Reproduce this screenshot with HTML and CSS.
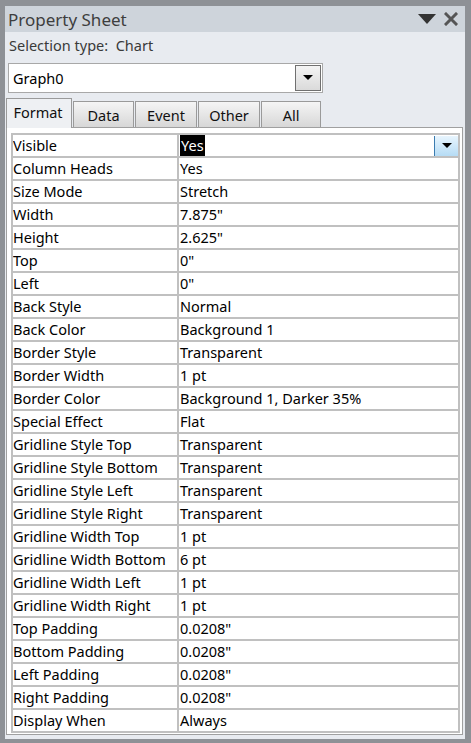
FILE: index.html
```html
<!DOCTYPE html>
<html>
<head>
<meta charset="utf-8">
<link rel="stylesheet" href="styles.css">
</head>
<body>
<div class="frame">
  <div class="panel">
    <div class="titlebar">
      <span class="title">Property Sheet</span>
      <div class="tb-icons">
        <svg class="tb-tri" width="18" height="11" viewBox="0 0 18 11"><polygon points="0,0 18,0 9,10" fill="#333"/></svg>
        <svg class="tb-x" width="14" height="14" viewBox="0 0 14 14"><path d="M2 2 L12 12 M12 2 L2 12" stroke="#555" stroke-width="3" stroke-linecap="square"/></svg>
      </div>
    </div>
    <div class="seltype">Selection type:&nbsp; Chart</div>
    <div class="combo">
      <span class="combo-text">Graph0</span>
      <div class="combo-btn"><svg width="10" height="6" viewBox="0 0 10 6"><polygon points="0,0 10,0 5,5" fill="#000"/></svg></div>
    </div>
    <div class="tabs">
      <div class="tab active">Format</div>
      <div class="tab">Data</div>
      <div class="tab">Event</div>
      <div class="tab">Other</div>
      <div class="tab">All</div>
    </div>
    <div class="tabbody">
      <div class="grid">
        <div class="cell name">Visible</div>
        <div class="cell value first"><span class="sel">Yes</span><div class="dd-btn"><svg width="10" height="6" viewBox="0 0 10 6"><polygon points="0,0 10,0 5,5" fill="#000"/></svg></div></div>
        <div class="cell name">Column Heads</div><div class="cell value">Yes</div>
        <div class="cell name">Size Mode</div><div class="cell value">Stretch</div>
        <div class="cell name">Width</div><div class="cell value">7.875"</div>
        <div class="cell name">Height</div><div class="cell value">2.625"</div>
        <div class="cell name">Top</div><div class="cell value">0"</div>
        <div class="cell name">Left</div><div class="cell value">0"</div>
        <div class="cell name">Back Style</div><div class="cell value">Normal</div>
        <div class="cell name">Back Color</div><div class="cell value">Background 1</div>
        <div class="cell name">Border Style</div><div class="cell value">Transparent</div>
        <div class="cell name">Border Width</div><div class="cell value">1 pt</div>
        <div class="cell name">Border Color</div><div class="cell value">Background 1, Darker 35%</div>
        <div class="cell name">Special Effect</div><div class="cell value">Flat</div>
        <div class="cell name">Gridline Style Top</div><div class="cell value">Transparent</div>
        <div class="cell name">Gridline Style Bottom</div><div class="cell value">Transparent</div>
        <div class="cell name">Gridline Style Left</div><div class="cell value">Transparent</div>
        <div class="cell name">Gridline Style Right</div><div class="cell value">Transparent</div>
        <div class="cell name">Gridline Width Top</div><div class="cell value">1 pt</div>
        <div class="cell name">Gridline Width Bottom</div><div class="cell value">6 pt</div>
        <div class="cell name">Gridline Width Left</div><div class="cell value">1 pt</div>
        <div class="cell name">Gridline Width Right</div><div class="cell value">1 pt</div>
        <div class="cell name">Top Padding</div><div class="cell value">0.0208"</div>
        <div class="cell name">Bottom Padding</div><div class="cell value">0.0208"</div>
        <div class="cell name">Left Padding</div><div class="cell value">0.0208"</div>
        <div class="cell name">Right Padding</div><div class="cell value">0.0208"</div>
        <div class="cell name">Display When</div><div class="cell value">Always</div>
      </div>
    </div>
  </div>
</div>
</body>
</html>
```
FILE: styles.css
```css
* { box-sizing: border-box; }
html, body { margin: 0; padding: 0; }
body {
  width: 471px;
  height: 743px;
  background: #8e9196;
  font-family: "Noto Sans", "Open Sans", sans-serif;
  overflow: hidden;
}
.frame {
  width: 471px;
  height: 743px;
  padding: 6px 6px 4px 5px;
}
.panel {
  width: 100%;
  height: 100%;
  background: #e8ebf0;
  display: flex;
  flex-direction: column;
}
.titlebar {
  height: 26px;
  background: #ced4db;
  display: flex;
  align-items: center;
  justify-content: space-between;
  padding: 0 7px 0 3px;
}
.title {
  font-size: 17px;
  color: #3e3e3e;
}
.tb-icons {
  display: flex;
  align-items: center;
  gap: 8px;
}
.tb-tri { margin-top: 1px; }
.seltype {
  font-size: 14.5px;
  color: #3a3a3a;
  padding: 3px 0 0 4px;
  height: 31px;
}
.combo {
  margin-left: 3px;
  width: 315px;
  height: 30px;
  background: #fff;
  border: 1px solid #a8a8a8;
  display: flex;
  align-items: center;
  justify-content: space-between;
  padding: 0 1px 0 4px;
}
.combo-text {
  font-size: 14.5px;
  color: #000;
}
.combo-btn {
  width: 26px;
  height: 26px;
  border: 1px solid #707070;
  background: linear-gradient(#f4f4f4, #dadada);
  display: flex;
  align-items: center;
  justify-content: center;
}
.tabs {
  margin-top: 5px;
  margin-left: 1px;
  display: flex;
  align-items: flex-end;
  height: 29px;
  position: relative;
  z-index: 1;
}
.tab {
  height: 26px;
  border: 1px solid #9a9a9a;
  border-bottom: none;
  background: linear-gradient(#f5f5f5, #d7d7d7);
  font-size: 14.5px;
  color: #111;
  display: flex;
  align-items: center;
  justify-content: center;
  margin-left: 1px;
}
.tab:nth-child(2) { width: 61px; }
.tab:nth-child(3) { width: 62px; }
.tab:nth-child(4) { width: 62px; }
.tab:nth-child(5) { width: 60px; }
.tab.active {
  width: 66px;
  height: 30px;
  margin-left: 0;
  background: #eef0f3;
  padding-bottom: 3px;
  padding-right: 2px;
  margin-bottom: -1px;
}
.tabbody {
  margin-left: 1px;
  width: 457px;
  flex: 1;
  background: #fff;
  border: 1px solid #a0a0a0;
  margin-bottom: 4px;
  padding: 5px 2px 0 4px;
}
.grid {
  display: grid;
  grid-template-columns: 164px 1fr;
  grid-auto-rows: 21px;
  gap: 2px;
  background: #c0c0c0;
  padding: 2px;
}
.cell {
  background: #fff;
  font-size: 14.5px;
  color: #000;
  line-height: 21px;
  white-space: nowrap;
  overflow: hidden;
}
.value { padding-left: 1px; }
.value.first {
  display: flex;
  justify-content: space-between;
  align-items: stretch;
}
.sel {
  background: #000;
  color: #fff;
  padding: 0 1px;
}
.dd-btn {
  width: 24px;
  margin-top: 1px;
  border-left: 1px solid #3b7cb0;
  background: linear-gradient(#e8f5fe, #b6dcf5);
  display: flex;
  align-items: center;
  justify-content: center;
}
```
